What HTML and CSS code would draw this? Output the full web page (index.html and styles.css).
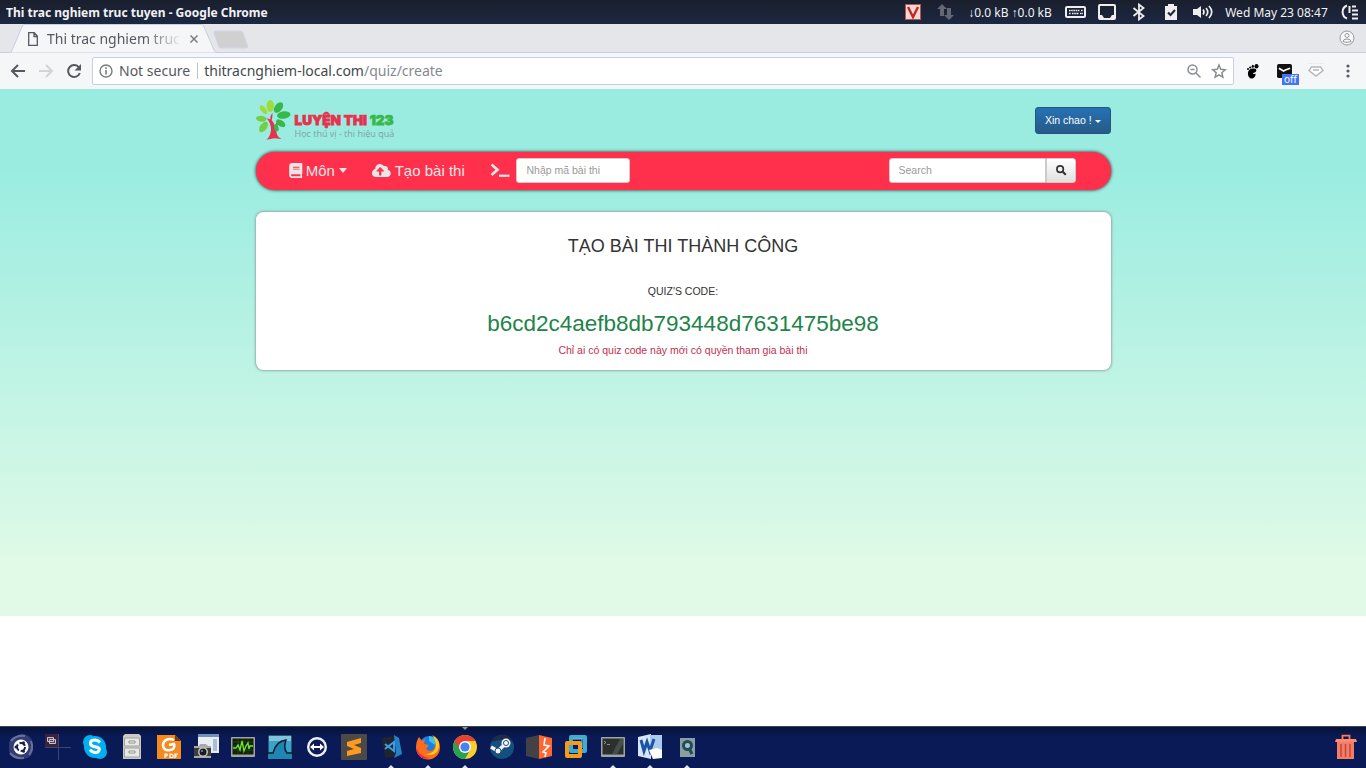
FILE: index.html
```html
<!DOCTYPE html>
<html lang="vi">
<head>
<meta charset="utf-8">
<title>Thi trac nghiem truc tuyen</title>
<link rel="stylesheet" href="styles.css">
</head>
<body>
<header class="panel">
  <strong class="panel-title">Thi trac nghiem truc tuyen - Google Chrome</strong>
  <div class="indicators">
    <span class="slot"><svg width="16" height="16" viewBox="0 0 16 16"><rect width="16" height="16" fill="#b85450"/><rect x="1" y="1" width="14" height="14" fill="#f3d9d5"/><path d="M3 3l5 10 5-10" fill="none" stroke="#c4281f" stroke-width="2.4"/></svg></span>
    <span class="slot"><svg width="17" height="16" viewBox="0 0 17 16" fill="#626773"><path d="M5 0l5 5H7v7H3V5H0zM12 16l-5-5h3V4h4v7h3z"/></svg></span>
    <span class="net">↓0.0 kB ↑0.0 kB</span>
    <span class="slot"><svg width="21" height="12" viewBox="0 0 21 12"><rect x="1" y="1" width="19" height="10" rx="1" fill="none" stroke="#eee" stroke-width="2"/><path d="M4 4.500h11M16 4.500h2M4 7.500h2M7 7.500h7M15 7.500h3" stroke="#eee" stroke-width="1.600" stroke-dasharray="1.600 .600"/></svg></span>
    <span class="slot"><svg width="18" height="16" viewBox="0 0 18 16"><path fill="#eee" fill-rule="evenodd" d="M2 0h14q2 0 2 2v12q0 2-2 2H2q-2 0-2-2V2q0-2 2-2zM2 2v9h2l2 3h6l2-3h2V2z"/></svg></span>
    <span class="slot"><svg width="14" height="16" viewBox="0 0 14 16"><path d="M1.500 4l10 8L7 15.500V.500L11.500 4l-10 8" fill="none" stroke="#eee" stroke-width="1.800"/></svg></span>
    <span class="slot"><svg width="12" height="16" viewBox="0 0 12 16"><path fill="#eee" d="M0 2h3V0h6v2h3v14H0z"/><path d="M3 8.500l2.500 2.500 4.500-5" fill="none" stroke="#1d2538" stroke-width="2"/></svg></span>
    <span class="slot"><svg width="20" height="14" viewBox="0 0 20 14"><path fill="#eee" d="M0 4h4l4-3v12l-4-3H0z"/><path d="M10 4.500q2 2.500 0 5M13 3q3.500 4 0 8M16 1q5.500 6 0 12" fill="none" stroke="#eee" stroke-width="1.700"/></svg></span>
    <time class="clock">Wed May 23 08:47</time>
    <span class="slot"><svg width="18" height="16" viewBox="0 0 18 16"><path d="M6 1.500a7 7 0 0 0 0 13M8.500 2v7" fill="none" stroke="#eee" stroke-width="2"/><path d="M11 2.500h4M11 6.500h6M11 10.500h6M11 14.500h6" stroke="#eee" stroke-width="2"/></svg></span>
  </div>
</header>

<div class="tabstrip">
  <div class="tab">
    <svg class="tab-shape" width="206" height="29" viewBox="0 0 206 29"><path d="M0 28.500L11 3Q12 .5 14 .5H190q2 0 3 2.500l10 23q1 2.500 3 2.500" fill="#f5f6f8" stroke="#c9cee4"/></svg>
    <svg width="10" height="14" viewBox="0 0 10 14"><path d="M.7.700h5.500L9.300 4v9.300H.700zM6 .7V4.500h3.300" fill="none" stroke="#55585f" stroke-width="1.300"/></svg>
    <span class="tab-title">Thi trac nghiem truc tuyen</span>
    <button class="plain" aria-label="Close tab"><svg width="8" height="8" viewBox="0 0 8 8"><path d="M.500.500l7 7M7.500.500l-7 7" stroke="#7b7d83" stroke-width="1.500"/></svg></button>
  </div>
  <button class="plain newtab" aria-label="New tab"><svg width="36" height="19" viewBox="0 0 36 19"><path d="M2 1h26q1 0 2 2l4.500 13q.5 2-1 2H8q-2 0-2.500-2L1 3Q.5 1 2 1z" fill="#d0d0d1" stroke="#d0d4e8"/></svg></button>
  <button class="plain profile" aria-label="Profile"><svg width="16" height="16" viewBox="0 0 16 16" fill="none" stroke="#97999e"><circle cx="8" cy="8" r="7" fill="#f7f7f8"/><circle cx="8" cy="5.500" r="2"/><path d="M4 11.500q0-2.500 4-2.500t4 2.500q-4 2-8 0z"/></svg></button>
</div>

<div class="toolbar">
  <button class="plain" aria-label="Back"><svg width="16" height="14" viewBox="0 0 16 14"><path d="M15 7H2M8 1L2 7l6 6" fill="none" stroke="#55585f" stroke-width="2"/></svg></button>
  <button class="plain" aria-label="Forward"><svg width="16" height="14" viewBox="0 0 16 14"><path d="M1 7h13M8 1l6 6-6 6" fill="none" stroke="#d3d4d7" stroke-width="2"/></svg></button>
  <button class="plain" aria-label="Reload"><svg width="16" height="16" viewBox="0 0 16 16"><path d="M13 4.500A6 6 0 1 0 13.800 10" fill="none" stroke="#55585f" stroke-width="2"/><path d="M15 1v6.500H8.500z" fill="#55585f"/></svg></button>
  <div class="omnibox">
    <svg width="14" height="14" viewBox="0 0 14 14"><circle cx="7" cy="7" r="6" fill="none" stroke="#7a7d83" stroke-width="1.400"/><path d="M7 6v4.500M7 3.300v1.600" stroke="#7a7d83" stroke-width="1.600"/></svg>
    <span class="security">Not secure</span>
    <span class="url">thitracnghiem-local.com<span class="path">/quiz/create</span></span>
    <button class="plain" aria-label="Zoom"><svg width="14" height="14" viewBox="0 0 14 14" fill="none" stroke="#8b8e94" stroke-width="1.500"><circle cx="5.500" cy="5.500" r="4.500"/><path d="M9 9l4.500 4.500M3.500 5.500h4"/></svg></button>
    <button class="plain" aria-label="Bookmark"><svg width="14" height="14" viewBox="0 0 14 14"><path d="M7 1l1.700 4.300 4.600.4-3.500 3 1.100 4.500L7 10.800l-3.900 2.400 1.100-4.500-3.500-3 4.600-.4z" fill="none" stroke="#85888e" stroke-width="1.400"/></svg></button>
  </div>
  <div class="extensions">
    <button class="plain ext" aria-label="Gnome extension"><svg width="13" height="15" viewBox="0 0 13 15"><path d="M6 4.500c4-.5 5 1.500 4 3C9 9 7 8.500 7 9.500s1.500.5 2.500 0C10 12 8 15 5 14.500 1.500 14 0 5.500 6 4.500z"/><ellipse cx="10.500" cy="2.200" rx="2" ry="2.200"/><ellipse cx="6.800" cy="2.300" rx="1.100" ry="1.500"/><circle cx="4.200" cy="3.500" r="1.100"/><circle cx="2" cy="5" r="1"/></svg></button>
    <button class="plain ext" aria-label="Mail extension, off"><svg width="15" height="14" viewBox="0 0 16 15"><rect width="16" height="15" rx="2" fill="#111"/><path d="M2 4.500l5 3 2-1 5-2" fill="none" stroke="#fff" stroke-width="1.800"/></svg><span class="badge">off</span></button>
    <button class="plain ext" aria-label="Gem extension"><svg width="16" height="16" viewBox="0 0 16 16"><path d="M0 .5h16" stroke="#ececee"/><path d="M3.500 4h9L15 7.500 8 13 1 7.500zM5 7h6" fill="#fff" stroke="#b4b6b9" stroke-width="1.400"/></svg></button>
    <button class="plain ext" aria-label="Menu"><svg width="4" height="14" viewBox="0 0 4 14" fill="#5a5d66"><circle cx="2" cy="2" r="1.600"/><circle cx="2" cy="7" r="1.600"/><circle cx="2" cy="12" r="1.600"/></svg></button>
  </div>
</div>

<main class="viewport">
  <div class="page">
    <div class="container">
      <div class="brandbar">
        <a class="logo" href="#">
          <svg width="46" height="54" viewBox="0 0 46 54"><path d="M14 53q5-4 6-13 0-9-6-16l5 2q0-6 3-9 0 6-1 10 3 3 4 8 2-6 7-8-4 6-5 13 0 9 7 12l-10-1-10 2z" fill="#e8304f"/><g fill="#9fdc3b"><ellipse cx="19" cy="8" rx="5" ry="8"/><ellipse cx="10" cy="13" rx="3.500" ry="7" transform="rotate(-38 10 13)"/></g><g fill="#75ce47"><ellipse cx="7" cy="25" rx="7" ry="4" transform="rotate(5 7 25)"/><ellipse cx="10" cy="36" rx="4.500" ry="8" transform="rotate(35 10 36)"/></g><g fill="#38b84a"><ellipse cx="30" cy="10" rx="5" ry="8" transform="rotate(38 30 10)"/><ellipse cx="37" cy="20" rx="9" ry="5" transform="rotate(-8 37 20)"/><ellipse cx="33" cy="31" rx="7" ry="4" transform="rotate(35 33 31)"/><ellipse cx="27" cy="37" rx="3" ry="5" transform="rotate(-15 27 37)"/></g></svg>
          <span class="logo-text"><span class="logo-name">LUYỆN THI <b>123</b></span><span class="logo-tag">Học thú vị - thi hiệu quả</span></span>
        </a>
        <button class="user">Xin chao ! <i class="caret"></i></button>
      </div>
      <nav class="nav">
        <a href="#"><svg width="18" height="20" viewBox="0 0 448 512"><path fill="currentColor" fill-rule="evenodd" d="M448 360V24c0-13-11-24-24-24H96C43 0 0 43 0 96v320c0 53 43 96 96 96h328c13 0 24-11 24-24v-16c0-8-4-14-9-19-4-15-4-59 0-74 5-4 9-11 9-19zM128 134c0-3 3-6 6-6h212c3 0 6 3 6 6v20c0 3-3 6-6 6H134c-3 0-6-3-6-6zm0 64c0-3 3-6 6-6h212c3 0 6 3 6 6v20c0 3-3 6-6 6H134c-3 0-6-3-6-6zm253 250H96c-18 0-32-14-32-32s14-32 32-32h285c-2 17-2 47 0 64z"/></svg>Môn <i class="caret big"></i></a>
        <a href="#"><svg width="25" height="20" viewBox="0 0 640 512"><path fill="currentColor" fill-rule="evenodd" d="M537 227c5-11 7-23 7-35 0-68-76-117-137-80C379 63 327 32 272 32c-92 0-163 77-160 168C47 223 0 284 0 356c0 70 54 124 144 124h368c71 0 128-57 128-128 0-62-44-114-103-125zM393 288h-73v120c0 9-7 16-16 16h-48c-9 0-16-7-16-16V288h-73c-14 0-21-17-11-27l113-113c6-6 16-6 22 0l113 113c10 10 3 27-11 27z"/></svg>Tạo bài thi</a>
        <label class="code-entry"><svg width="26" height="20" viewBox="0 0 26 20"><path d="M2 2l8 7-8 7" fill="none" stroke="currentColor" stroke-width="3.500"/><path d="M12 17h14" stroke="currentColor" stroke-width="3"/></svg><input type="text" placeholder="Nhập mã bài thi" aria-label="Nhập mã bài thi"></label>
        <form class="search">
          <input type="text" placeholder="Search" aria-label="Search">
          <button type="button" aria-label="Search"><svg width="14" height="14" viewBox="0 0 14 14"><circle cx="5.500" cy="5.500" r="4.300" fill="none" stroke="#333" stroke-width="2.200"/><path d="M9 9l4 4" stroke="#333" stroke-width="2.800"/></svg></button>
        </form>
      </nav>
      <section class="card">
        <h1>TẠO BÀI THI THÀNH CÔNG</h1>
        <p>QUIZ'S CODE:</p>
        <p class="code">b6cd2c4aefb8db793448d7631475be98</p>
        <p class="note">Chỉ ai có quiz code này mới có quyền tham gia bài thi</p>
      </section>
    </div>
  </div>
</main>

<footer class="dock">
  <button class="plain app" aria-label="Dash"><svg width="26" height="26" viewBox="0 0 26 26"><path d="M13 0c8 0 12 5 12 13s-3 12-12 12S1 22 1 13 3 4 13 0z" fill="#323c74"/><path d="M3 7Q8 1 17 2M2 19q5 6 14 5M23 7q3 8-2 14" fill="none" stroke="#6a7199" stroke-width="2"/><circle cx="13" cy="13" r="7.500" fill="#fff"/><circle cx="13" cy="13" r="4" fill="none" stroke="#17204a" stroke-width="2" stroke-dasharray="6.500 1.900"/><g fill="#17204a"><circle cx="8" cy="13" r="1.500"/><circle cx="15.500" cy="8.700" r="1.500"/><circle cx="15.500" cy="17.300" r="1.500"/></g></svg></button>
  <button class="plain app" aria-label="Workspaces"><svg width="26" height="26" viewBox="0 0 26 26"><rect width="13" height="13" fill="#3a2340"/><path d="M13.500 0v26M0 13.500h26" stroke="#3f466c"/><path d="M2.500 3.500h6v4h-6zM4.500 5.500h6v4h-6z" fill="#57405a" stroke="#c9c2cb"/></svg></button>
  <button class="plain app" aria-label="Skype"><svg width="26" height="26" viewBox="0 0 26 26" fill="#00aff0"><circle cx="13" cy="13" r="11"/><circle cx="8" cy="8" r="7"/><circle cx="18" cy="18" r="7"/><path d="M18 8.500q-2-2.500-5-2.500c-6 0-6 5.500-1 6.500s6 1.500 5 4c-1 3-7 2.500-9-1" fill="none" stroke="#fff" stroke-width="3"/></svg></button>
  <button class="plain app" aria-label="Files"><svg width="26" height="26" viewBox="0 0 26 26"><path d="M4 2l2-2h14l2 2v23H4z" fill="#c9cac5"/><path d="M5.500 4h15v8h-15zM5.500 14h15v9h-15z" fill="#e7e7e3" stroke="#a2a39f"/><path d="M10 7h6v2h-6zM10 17h6v2h-6z" fill="#fff" stroke="#8c8d89"/></svg></button>
  <button class="plain app" aria-label="PDF reader"><svg width="26" height="26" viewBox="0 0 26 26"><path d="M1 1h18l6 6v18H1z" fill="#f58a1f"/><path d="M19 1l6 6h-6z" fill="#6e3c12"/><path d="M18 6c-6-3-11 1-11 5s3 6 7 5c4 0 5-4 4-6l-5 1" fill="none" stroke="#fff" stroke-width="2.500"/><path d="M9 24v-4h2q1 2-2 2m5 1.500V20q4 0 3 3.500zm5 .5v-4h3m-3 2h2" fill="none" stroke="#fff" stroke-width="1.200"/></svg></button>
  <button class="plain app" aria-label="Screenshot"><svg width="26" height="26" viewBox="0 0 26 26"><path d="M5 0h21v19H5z" fill="#e9edf2"/><path d="M5 0h21v3H5z" fill="#6f91be"/><path d="M20 5h4v12h-4z" fill="#a9bdd8"/><path d="M1 12h5l1-2h6l2 2h3v12H1z" fill="#a9aaa7"/><path d="M1 14h17v8H1z" fill="#3c3e3d"/><circle cx="10" cy="18" r="5" fill="#c3c5c4"/><circle cx="10" cy="18" r="3.500" fill="#191b1c"/><circle cx="9" cy="17" r="1" fill="#7e93aa"/></svg></button>
  <button class="plain app" aria-label="System monitor"><svg width="26" height="26" viewBox="0 0 26 26"><rect x="1" y="3" width="24" height="20" rx="1" fill="#a2a49f"/><rect x="2.500" y="4.500" width="21" height="16" fill="#112208"/><path d="M3 8h20M3 12h20M3 16h20M8 5v15M13 5v15M18 5v15" stroke="#28521a" stroke-width=".7"/><path d="M3 14h3l2-3 2 5 2-9 2 10 2-5 2-3 1 6 1-3h3" fill="none" stroke="#71e535" stroke-width="1.300"/></svg></button>
  <button class="plain app" aria-label="Wireshark"><svg width="26" height="26" viewBox="0 0 26 26"><rect x="1" y="1" width="24" height="24" rx="1" fill="#3aa3ca" stroke="#0b1833"/><path d="M2 2h22v5H2z" fill="#82c4dc"/><path d="M1 19h5Q9 7 19 6q-3 8 1 13h5v6H1z" fill="#1d86b2"/><path d="M1 19h5Q9 7 19 6q-3 8 1 13h5" fill="none" stroke="#0c1c2c" stroke-width="1.500"/></svg></button>
  <button class="plain app" aria-label="TeamViewer"><svg width="26" height="26" viewBox="0 0 26 26"><circle cx="13" cy="13" r="8.800" fill="#0b1b55" stroke="#eef0f6" stroke-width="2.400"/><path d="M6 13l4-3.500V12h6V9.500l4 3.500-4 3.500V14h-6v2.500z" fill="#fff"/></svg></button>
  <button class="plain app" aria-label="Sublime Text"><svg width="26" height="26" viewBox="0 0 26 26"><rect width="26" height="26" rx="1" fill="#4b4a49"/><path d="M6 8l14-4v5l-7 2 7 3v5L6 22v-5l7-2-7-3z" fill="#ff9a1e"/></svg></button>
  <button class="plain app running" aria-label="VS Code"><svg width="26" height="26" viewBox="0 0 26 26"><path d="M4 4l13-2v21L7 24z" fill="#20242e"/><path d="M16 1l5 3 3 16-8 4 2-5z" fill="#2682c7"/><path d="M7 10l9 7V8l-9 7" fill="none" stroke="#3c9ee0" stroke-width="2"/></svg></button>
  <button class="plain app running" aria-label="Firefox"><svg width="26" height="26" viewBox="0 0 26 26"><circle cx="14" cy="12" r="10" fill="#1c7ee0"/><path d="M14 2q4 0 7 3l-1 6-6-4z" fill="#30c5ee"/><path d="M4 3l3 4 3-2-1 5 5 1-3 4c4 4 9 1 9-3 2-4 0-8-3-11 6 2 8 8 8 12A12 12 0 0 1 1 14Q1 7 4 3z" fill="#ff6b1c"/><path d="M18 2c7 4 7 9 5 14-2 5-8 6-13 4 10 0 14-7 8-18z" fill="#ffcb25"/><path d="M2 15q3 8 12 9-10 3-13-9z" fill="#e72b50"/></svg></button>
  <button class="plain app running focused" aria-label="Chrome"><svg width="26" height="26" viewBox="0 0 26 26"><circle cx="13" cy="13" r="12" fill="#fccd2b"/><path d="M13 13L2.600 7A12 12 0 0 1 23.400 7H13z" fill="#e34235"/><path d="M2.600 7A12 12 0 0 0 13 25l5-9-5-3z" fill="#2aa151"/><path d="M13 7h10.400L18 16z" fill="#fccd2b"/><path d="M2.600 7L8 16l5-9z" fill="#e34235"/><circle cx="13" cy="13" r="6" fill="#fff"/><circle cx="13" cy="13" r="4.600" fill="#4184f3"/></svg></button>
  <button class="plain app" aria-label="Steam"><svg width="26" height="26" viewBox="0 0 26 26"><circle cx="13" cy="13" r="12" fill="#14507f"/><path d="M2 8a12 12 0 0 1 22 0q-12-4-22 0z" fill="#1b2b4a"/><path d="M2 13l7 4 7-7" fill="none" stroke="#f1f3f6" stroke-width="3.500"/><circle cx="17" cy="9" r="4.500" fill="#f1f3f6"/><circle cx="17" cy="9" r="2.500" fill="#fff" stroke="#244d76"/><circle cx="9" cy="17" r="3" fill="#f1f3f6" stroke="#244d76"/></svg></button>
  <button class="plain app" aria-label="Burp Suite"><svg width="26" height="26" viewBox="0 0 26 26"><path d="M0 4l13-3v24L0 22z" fill="#424143"/><path d="M13 1l13 3v18l-13 3z" fill="#ff6633"/><path d="M19 4l-1 7 5 1-6 6 3 1-1 4" fill="none" stroke="#fff" stroke-width="1.600"/></svg></button>
  <button class="plain app" aria-label="VMware"><svg width="26" height="26" viewBox="0 0 26 26" fill="none" stroke-linejoin="round"><path d="M8 3h14v14H8z" stroke="#41acd0" stroke-width="4"/><path d="M4 9h13v13H4z" stroke="#f49b1c" stroke-width="4"/><path d="M10 5h9M19 5v9" stroke="#7ccae4"/></svg></button>
  <button class="plain app running" aria-label="Terminal"><svg width="26" height="26" viewBox="0 0 26 26"><rect x="1" y="3" width="24" height="20" rx="1" fill="#a2a49f"/><rect x="2.500" y="4.500" width="21" height="16" fill="#2b302d"/><path d="M12 20l8-15h3v5l-6 10z" fill="#454e48"/><path d="M4 7l2 1.500L4 10M7 10.500h3" fill="none" stroke="#a3a8a4" stroke-width=".8"/></svg></button>
  <button class="plain app running" aria-label="Word"><svg width="26" height="26" viewBox="0 0 26 26"><path d="M1 3l13-3v25L1 22z" fill="#d7e6f8"/><path d="M13 1h12v20H13z" fill="#a9cbed"/><path d="M4 6l3 11 3-9 3 9 4-12" fill="none" stroke="#1c54a5" stroke-width="3"/><path d="M12 16l8-2 5 2v8l-9 1z" fill="#fff"/></svg></button>
  <button class="plain app running" aria-label="Image search"><svg width="26" height="26" viewBox="0 0 26 26"><rect x="6" y="4" width="15" height="19" fill="#8aa0a0"/><circle cx="13.500" cy="11.500" r="4" fill="#a9c2c1" stroke="#214d5b" stroke-width="3"/><path d="M15 14l3 6" stroke="#214d5b" stroke-width="3"/></svg></button>
  <button class="plain app trash" aria-label="Trash"><svg width="26" height="26" viewBox="0 0 26 26"><path d="M9.500 6V1.700h7V6" fill="none" stroke="#f77c63" stroke-width="1.800"/><path d="M3 5h20l1 3H2z" fill="#ff8a70"/><path d="M4 8h17v17H4z" fill="#f77c63"/><path d="M8 10v13M12.500 10v13M17 10v13" stroke="#b84c42" stroke-width="1.500"/></svg></button>
</footer>
</body>
</html>
```
FILE: styles.css
```css
* { box-sizing: border-box; }
body {
  margin: 0;
  min-height: 100vh;
  display: flex;
  flex-direction: column;
  background: #fff;
  font-family: "Noto Sans", "Open Sans", sans-serif;
}
svg { display: block; flex: none; overflow: visible; }
.plain {
  display: flex;
  align-items: center;
  justify-content: center;
  padding: 0;
  border: 0;
  background: none;
}

/* Desktop panel */
.panel {
  height: 24px;
  display: flex;
  align-items: center;
  justify-content: space-between;
  padding-left: 6px;
  background: linear-gradient(#1a1f2c, #1c2742);
  color: #f2f2f2;
  font-size: 12px;
  white-space: nowrap;
}
.indicators { display: flex; align-items: center; }
.slot { width: 32px; display: flex; justify-content: center; }
.net { width: 98px; text-align: center; }
.clock { width: 115px; text-align: center; }

/* Browser */
.tabstrip {
  height: 29px;
  display: flex;
  align-items: center;
  padding: 0 11px;
  background: #e4e6ea;
  border-bottom: 1px solid #c9cee4;
}
.tab {
  position: relative;
  width: 202px;
  height: 28px;
  display: flex;
  align-items: center;
  padding: 2px 15px 0 17px;
  color: #55585f;
}
.tab-shape { position: absolute; left: 0; top: 0; }
.tab > :not(.tab-shape) { position: relative; }
.tab-title {
  flex: 1;
  margin: 0 7px 0 9px;
  overflow: hidden;
  white-space: nowrap;
  font-size: 14px;
  line-height: 20px;
  -webkit-mask-image: linear-gradient(90deg, #000 72%, transparent);
  mask-image: linear-gradient(90deg, #000 72%, transparent);
}
.newtab { padding-top: 3px; }
.profile { margin-left: auto; }
.toolbar {
  height: 36px;
  display: flex;
  align-items: center;
  gap: 12px;
  padding: 0 2px 0 10px;
  background: #f5f6f8;
}
.omnibox {
  flex: 1;
  height: 28px;
  margin-left: -2px;
  display: flex;
  align-items: center;
  padding: 0 7px 0 6px;
  border: 1px solid #c9cee4;
  border-radius: 2px;
  background: #fff;
  color: #55585f;
  font-size: 14px;
  line-height: 16px;
}
.security { margin: 0 6px; padding-right: 7px; border-right: 1px solid #c0c2c6; }
.url { flex: 1; color: #44474d; }
.path { color: #85888e; }
.omnibox button + button { margin-left: 11px; }
.extensions { display: flex; margin-left: -10px; }
.ext { position: relative; width: 32px; height: 28px; }
.badge {
  position: absolute;
  left: 14px;
  bottom: 0;
  padding: 0 2px;
  background: #4274f4;
  color: #fff;
  font: 10px/11px "Noto Sans", sans-serif;
}

/* Web page, shown at the 75% browser zoom level */
.viewport {
  flex: 1;
  zoom: 0.75;
  font: 14px/20px "Liberation Sans", Arial, sans-serif;
  color: #333;
}
.page {
  min-height: 703px;
  background: linear-gradient(#9aece1 15%, #e0fae7 90%);
}
.container { max-width: 1170px; margin: 0 auto; padding: 0 15px; }
.brandbar {
  height: 84px;
  display: flex;
  align-items: center;
  justify-content: space-between;
}
.logo { display: flex; gap: 6px; text-decoration: none; }
.logo-text { display: flex; flex-direction: column; padding-top: 14px; }
.logo-name {
  font: 900 18px/24px Inter, sans-serif;
  color: #e8304f;
  -webkit-text-stroke: 1px;
}
.logo-name b { font-weight: 900; color: #38b84a; }
.logo-tag { font: 12px/14px "Open Sans", sans-serif; color: #7f9f9f; }
.user {
  height: 35px;
  padding: 0 12px;
  border: 1px solid #245580;
  border-radius: 4px;
  background: linear-gradient(#2672b4, #265a88);
  color: #fff;
  font: 14px/20px "Liberation Sans", Arial, sans-serif;
}
.caret {
  display: inline-block;
  border: 4px solid transparent;
  border-top-color: currentColor;
  border-bottom: 0;
  vertical-align: middle;
}
.caret.big { border-width: 7px 6px 0; }
.nav {
  min-height: 50px;
  display: flex;
  align-items: center;
  padding: 0 46px 1px 44px;
  border-radius: 25px;
  background: #ff304b;
  box-shadow: 0 0 4px 1px #47625f;
  color: #e7e7e7;
  font-size: 20px;
}
.nav a {
  display: flex;
  align-items: center;
  gap: 5px;
  margin-right: 34px;
  color: inherit;
  text-decoration: none;
}
.code-entry { display: flex; align-items: center; gap: 9px; }
.nav input {
  height: 34px;
  padding: 0 12px;
  border: 1px solid #ccc;
  border-radius: 4px;
  background: #fff;
  font: 14px/20px "Liberation Sans", Arial, sans-serif;
}
.nav input::placeholder { color: #999; }
.code-entry input { width: 151px; }
.search { display: flex; margin-left: auto; }
.search input { width: 210px; border-radius: 4px 0 0 4px; }
.search button {
  width: 40px;
  display: flex;
  align-items: center;
  justify-content: center;
  border: 1px solid #ccc;
  border-radius: 0 4px 4px 0;
  background: linear-gradient(#fff, #e0e0e0);
}
.card {
  margin-top: 30px;
  padding: 32px 20px 16px;
  border-radius: 10px;
  background: #fff;
  box-shadow: 0 0 3px 1px #8fb0ab;
  text-align: center;
}
.card h1 { margin: 0 0 36px; font-size: 24px; line-height: 28px; font-weight: 400; }
.card p { margin: 0; }
.card .code { margin: 16px 0 9px; font-size: 30px; line-height: 34px; color: #1e8449; }
.card .note { color: #c0304e; }

/* Dock */
.dock {
  height: 42px;
  display: flex;
  align-items: center;
  padding: 0 2px;
  border-top: 1px solid #3d4657;
  background: linear-gradient(#061238, #0a1a56 25%, #0a1a56);
}
.app { position: relative; width: 37px; height: 41px; padding-bottom: 2px; }
.trash { margin-left: auto; }
.running::after, .focused::before {
  content: "";
  position: absolute;
  left: 16px;
  bottom: 0;
  border: 3px solid transparent;
  border-top: 0;
  border-bottom-color: #dfe3ee;
}
.focused::before {
  top: 0;
  bottom: auto;
  border-top: 3px solid #8b93a8;
  border-bottom: 0;
}
```
